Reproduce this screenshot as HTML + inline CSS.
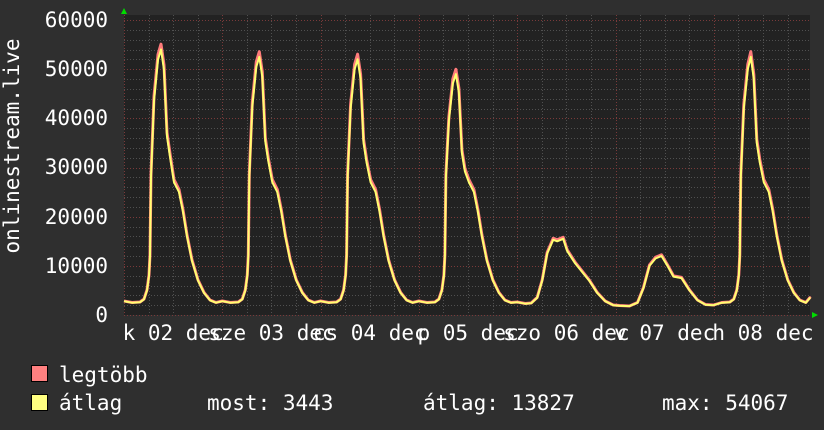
<!DOCTYPE html>
<html><head><meta charset="utf-8"><style>
html,body{margin:0;padding:0;background:#2f2f2f;}
svg{display:block;font-family:"DejaVu Sans Mono","Liberation Mono",monospace;}
</style></head><body>
<svg id="s" width="824" height="430" xmlns="http://www.w3.org/2000/svg">
<rect width="824" height="430" fill="#2f2f2f"/>
<rect x="124" y="15" width="686" height="300" fill="#222222"/>
<g id="grid"></g>
<g fill="#ffffff" font-size="21" text-anchor="end">
<text x="108" y="27">60000</text>
<text x="108" y="76">50000</text>
<text x="108" y="125">40000</text>
<text x="108" y="174">30000</text>
<text x="108" y="224">20000</text>
<text x="108" y="273">10000</text>
<text x="108" y="322">0</text>
</g>
<text transform="translate(19,146) rotate(-90)" fill="#fff" font-size="21" text-anchor="middle">onlinestream.live</text>
<g id="xl" fill="#fff" font-size="21" text-anchor="middle"></g>
<polyline id="red" fill="none" stroke="#ff7b7b" stroke-width="3" stroke-linejoin="round"/>
<polyline id="yel" fill="none" stroke="#ffff70" stroke-width="2" stroke-linejoin="round"/>
<polygon points="121,14 127,14 124,8" fill="#00dd00"/>
<polygon points="812,312 812,318 818,315" fill="#00dd00"/>
<rect x="31.5" y="365.5" width="16" height="16" fill="#ff8080" stroke="#000"/>
<rect x="31.5" y="394.5" width="16" height="16" fill="#ffff80" stroke="#000"/>
<g fill="#fff" font-size="21">
<text x="59" y="382">legtöbb</text>
<text x="59" y="410">átlag</text>
<text x="207" y="410">most: 3443</text>
<text x="423" y="410">átlag: 13827</text>
<text x="662" y="410">max: 54067</text>
</g>
</svg>
<script>
var NS="http://www.w3.org/2000/svg";
function el(t,a,p){var e=document.createElementNS(NS,t);for(var k in a)e.setAttribute(k,a[k]);p.appendChild(e);return e;}
var g=document.getElementById('grid');
var x0=124,x1=810,dw=98.3;
function Y(v){return 315-v*295/60000;}
for(var v=0;v<=60000;v+=2000){var y=Math.round(Y(v))+0.5;var maj=v%10000==0;
el('line',{x1:x0,x2:x1,y1:y,y2:y,stroke:maj?'#7a3a3a':'#505050','stroke-dasharray':'1,2'},g);}
for(var i=0;i<=28;i++){var x=Math.round(x0+i*dw/4)+0.5;if(x>x1)break;var maj=i%4==0;
el('line',{x1:x,x2:x,y1:15,y2:315,stroke:maj?'#7a3a3a':'#505050','stroke-dasharray':'1,2'},g);}
var labs=["k 02 dec","sze 03 dec","cs 04 dec","p 05 dec","szo 06 dec","v 07 dec","h 08 dec"];
var xl=document.getElementById('xl');
labs.forEach(function(l,i){var t=el('text',{x:x0+dw/2+i*dw,y:340},xl);t.textContent=l;});
var T=[[0,2800],[8,2500],[16,2600],[20,3200],[23,5000],[25,8000],[26,12000],[27,28000],[30,42000],[34,50000],[37,1],[40,48000],[43,35000],[46,31000],[50,27000],[55,25000],[59,21000],[63,16000],[68,11000],[74,7000],[80,4500],[86,3000],[92,2500]];
var pk=[54000,52500,52000,49000];
var pts=[];
function add(x,v){pts.push([x,v]);}
for(var d=0;d<4;d++){var b=x0+d*dw;var s=pk[d]/52000;
T.forEach(function(p){var v=p[1]==1?pk[d]:(p[1]>30000?p[1]*s:p[1]);add(b+p[0],v);});}
var b5=x0+4*dw;
[[0,2600],[8,2300],[14,2400],[20,3500],[25,7000],[30,12500],[36,15300],[40,15000],[46,15500],[50,13000],[58,10500],[66,8500],[72,7000],[80,4500],[88,2800],[96,2000]].forEach(function(p){add(b5+p[0],p[1]);});
var b6=x0+5*dw;
[[4,1900],[14,1800],[22,2500],[28,5500],[34,10000],[40,11500],[46,12000],[52,10000],[58,7800],[66,7500],[74,5000],[82,3000],[90,2100],[98,2000]].forEach(function(p){add(b6+p[0],p[1]);});
var b7=x0+6*dw;
T.forEach(function(p){if(p[0]<4)return;var v=p[1]==1?52500:p[1];add(b7+p[0],v);});
add(b7+96,3443);add(x1-1,3300);
var r=pts.map(function(p){return p[0].toFixed(1)+','+(Y(p[1]*1.02)).toFixed(1);}).join(' ');
var yy=pts.map(function(p){return p[0].toFixed(1)+','+Y(p[1]).toFixed(1);}).join(' ');
document.getElementById('red').setAttribute('points',r);
document.getElementById('yel').setAttribute('points',yy);
</script>
</body></html>
